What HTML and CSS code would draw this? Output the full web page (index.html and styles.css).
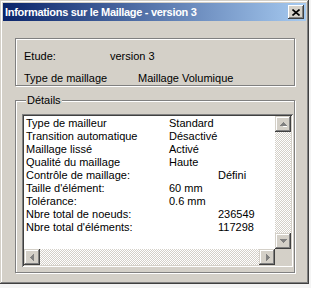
FILE: index.html
```html
<!DOCTYPE html>
<html lang="fr">
<head>
    <meta charset="UTF-8">
    <title>Informations sur le Maillage - version 3</title>
    <link rel="stylesheet" href="styles.css">
</head>
<body>

<div class="window">
    <div class="titlebar">
        <span class="title">Informations sur le Maillage - version 3</span>
        <button class="close" type="button">
            <svg width="8" height="7" viewBox="0 0 8 7"><path d="M0.5 0.5L7.5 6.5M7.5 0.5L0.5 6.5" stroke="#000" stroke-width="1.6" fill="none"/></svg>
        </button>
    </div>

    <div class="client">
        <div class="group summary">
            <div class="summary-row">
                <span class="key key-etude">Etude:</span>
                <span>version 3</span>
            </div>
            <div class="summary-row">
                <span class="key key-type">Type de maillage</span>
                <span>Maillage Volumique</span>
            </div>
        </div>

        <fieldset class="group details">
            <legend>Détails</legend>
            <div class="listbox">
                <div class="list-content">
                    <span>Type de mailleur</span><span>Standard</span>
                    <span>Transition automatique</span><span>Désactivé</span>
                    <span>Maillage lissé</span><span>Activé</span>
                    <span>Qualité du maillage</span><span>Haute</span>
                    <span>Contrôle de maillage:</span><span class="far">Défini</span>
                    <span>Taille d'élément:</span><span>60 mm</span>
                    <span>Tolérance:</span><span>0.6 mm</span>
                    <span>Nbre total de noeuds:</span><span class="far">236549</span>
                    <span>Nbre total d'éléments:</span><span class="far">117298</span>
                </div>
                <div class="vscroll">
                    <div class="scroll-btn">
                        <svg width="7" height="5" viewBox="0 0 7 5"><path d="M4 2h1v1h1v1h1v1h-4z" fill="#fff"/><path d="M3 0h1v1h1v1h1v1h1v1h-7v-1h1v-1h1v-1h1z" fill="#808080"/></svg>
                    </div>
                    <div class="track"></div>
                    <div class="scroll-btn">
                        <svg width="7" height="5" viewBox="0 0 7 5"><path d="M0 0h7v1h-1v1h-1v1h-1v1h-1v-1h-1v-1h-1v-1h-1z" fill="#808080"/></svg>
                    </div>
                </div>
                <div class="hscroll">
                    <div class="scroll-btn">
                        <svg width="5" height="7" viewBox="0 0 5 7"><path d="M3 0h1v7h-1v-1h-1v-1h-1v-1h-1v-1h1v-1h1v-1h1z" fill="#808080"/></svg>
                    </div>
                    <div class="track"></div>
                    <div class="scroll-btn">
                        <svg width="5" height="7" viewBox="0 0 5 7"><path d="M1 0h1v1h1v1h1v1h1v1h-1v1h-1v1h-1v1h-1z" fill="#808080"/></svg>
                    </div>
                </div>
                <div class="corner"></div>
            </div>
        </fieldset>
    </div>
</div>

</body>
</html>
```

FILE: styles.css
```css
body {
    margin: 0;
    padding: 0;
    background-color: #f4f4f4;
    font-family: "Liberation Sans", Arial, sans-serif;
    font-size: 11px;
    color: #000;
}
.window {
    width: 309px;
    height: 284px;
    box-sizing: border-box;
    padding: 3px;
    background-color: #d4d0c8;
    box-shadow: inset -1px -1px #404040, inset 1px 1px #d4d0c8, inset -2px -2px #808080, inset 2px 2px #fff;
}
.titlebar {
    height: 18px;
    display: flex;
    align-items: center;
    padding: 0 2px 0 2px;
    background: linear-gradient(to right, #0a246a, #a6caf0);
}
.title {
    color: #fff;
    font-weight: bold;
    font-size: 11px;
    letter-spacing: -0.3px;
}
.close {
    margin-left: auto;
    width: 16px;
    height: 14px;
    padding: 0;
    border: none;
    display: flex;
    align-items: center;
    justify-content: center;
    background-color: #d4d0c8;
    box-shadow: inset -1px -1px #404040, inset 1px 1px #fff, inset -2px -2px #808080;
}
.client {
    padding: 17px 11px 0 12px;
}
.group {
    border: 1px solid #808080;
    box-shadow: inset 1px 1px #fff, 1px 1px #fff;
}
.summary {
    height: 48px;
    padding: 11px 0 0 8px;
    box-sizing: border-box;
    display: flex;
    flex-direction: column;
    gap: 9px;
}
.summary-row {
    display: flex;
    line-height: 13px;
}
.key-etude {
    width: 86px;
}
.key-type {
    width: 114px;
}
.details {
    margin: 8px 0 0 0;
    padding: 7px 1px 5px 6px;
}
.details legend {
    padding: 0 1px;
    margin-left: 4px;
    line-height: 13px;
    background-color: #d4d0c8;
}
.listbox {
    display: grid;
    grid-template-columns: 1fr 16px;
    grid-template-rows: 133px 16px;
    padding: 2px;
    background-color: #fff;
    box-shadow: inset 1px 1px #808080, inset -1px -1px #fff, inset 2px 2px #404040, inset -2px -2px #d4d0c8;
}
.list-content {
    display: grid;
    grid-template-columns: 143px auto;
    grid-auto-rows: 13px;
    align-content: start;
    padding: 1px 0 0 2px;
    line-height: 13px;
    white-space: nowrap;
    overflow: hidden;
}
.list-content .far {
    padding-left: 49px;
}
.vscroll {
    display: flex;
    flex-direction: column;
}
.hscroll {
    display: flex;
}
.track {
    flex: 1;
    background: repeating-conic-gradient(#fff 0 25%, #d4d0c8 0 50%) 0 0 / 2px 2px;
}
.scroll-btn {
    width: 16px;
    height: 16px;
    flex: none;
    display: flex;
    align-items: center;
    justify-content: center;
    background-color: #d4d0c8;
    box-shadow: inset -1px -1px #404040, inset 1px 1px #d4d0c8, inset -2px -2px #808080, inset 2px 2px #fff;
}
.corner {
    background-color: #d4d0c8;
}
```
